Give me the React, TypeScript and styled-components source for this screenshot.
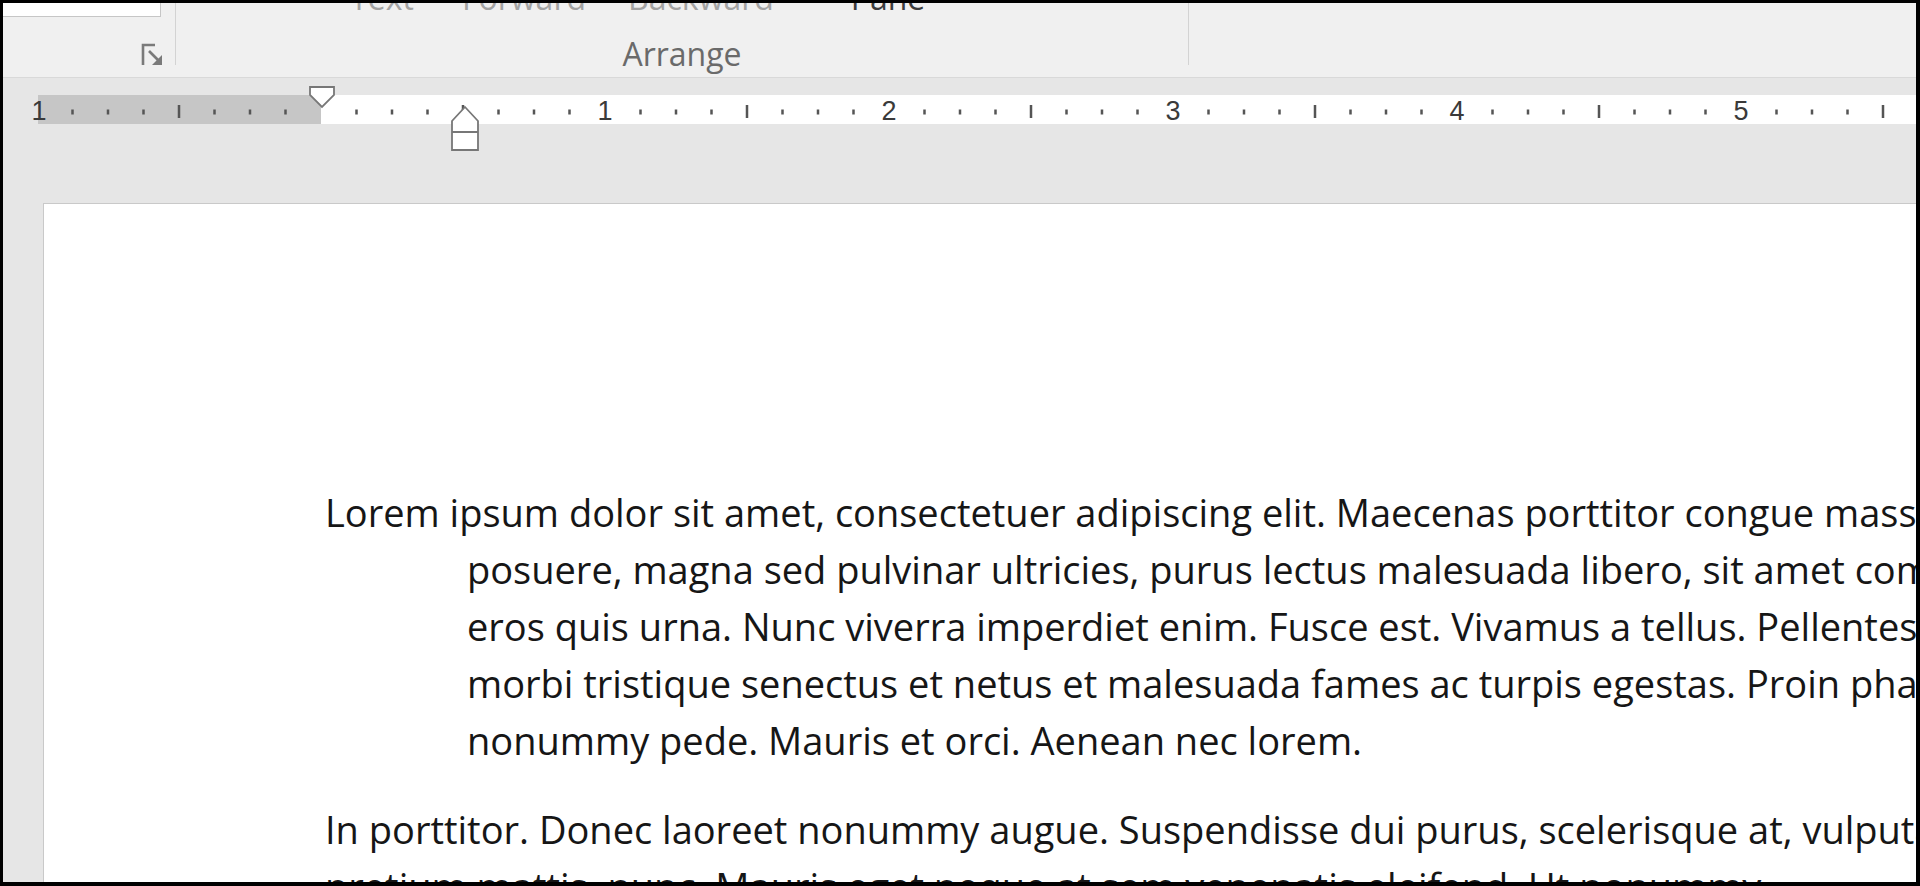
import styled, { createGlobalStyle } from 'styled-components';

const GlobalStyle = createGlobalStyle`
  html, body {
    margin: 0;
    padding: 0;
    background: #000;
  }
  body {
    font-family: "Open Sans", "Liberation Sans", sans-serif;
  }
`;

const Frame = styled.div`
  width: 1920px;
  height: 886px;
  box-sizing: border-box;
  border-style: solid;
  border-color: #000;
  border-width: 3px 4px 4px 3px;
  overflow: hidden;
  display: flex;
  flex-direction: column;
  background: #e6e6e6;
`;

const Ribbon = styled.div`
  flex: none;
  display: flex;
  height: 74px;
  background: #f0f0f0;
  border-bottom: 1px solid #d9d9d9;
`;

interface GroupProps {
  width?: number;
}

const Group = styled.div<GroupProps>`
  display: flex;
  flex-direction: column;
  justify-content: space-between;
  width: ${({ width }) => (width ? `${width}px` : 'auto')};
  flex: ${({ width }) => (width ? 'none' : '1')};
`;

const Separator = styled.div`
  flex: none;
  width: 1px;
  height: 62px;
  background: #d3d3d3;
`;

const InputBox = styled.div`
  width: 157px;
  height: 29px;
  margin-top: -17px;
  background: #fff;
  border: 1px solid #c6c6c6;
  border-left: none;
`;

const Launcher = styled.svg`
  align-self: flex-end;
  margin: 0 12px 11px 0;
  display: block;
`;

const ButtonRow = styled.div`
  display: flex;
  height: 40px;
  margin-top: -25px;
  padding-left: 154px;
`;

interface RibbonButtonProps {
  width: number;
  disabled?: boolean;
}

const RibbonButton = styled.div<RibbonButtonProps>`
  width: ${({ width }) => width}px;
  text-align: center;
  font-size: 32px;
  line-height: 40px;
  white-space: nowrap;
  color: ${({ disabled }) => (disabled ? '#a3a3a3' : '#3c3c3c')};
`;

const GroupLabel = styled.div`
  text-align: center;
  font-size: 32px;
  line-height: 40px;
  margin-bottom: 3px;
  color: #6a6a6a;
`;

const Workspace = styled.div`
  flex: 1;
  display: flex;
  flex-direction: column;
  min-height: 0;
`;

const RulerStrip = styled.svg`
  flex: none;
  display: block;
`;

const Page = styled.div`
  flex: 1;
  margin-left: 40px;
  padding: 280px 0 0 281px;
  background: #fff;
  border-top: 1px solid #c9c9c9;
  border-left: 1px solid #c9c9c9;
  font-family: "Open Sans", "Liberation Sans", sans-serif;
  font-size: 38px;
  line-height: 57px;
  color: #161616;
`;

const Paragraph = styled.div`
  margin: 0 0 32px;
`;

interface LineProps {
  hang?: boolean;
}

const Line = styled.div<LineProps>`
  white-space: nowrap;
  padding-left: ${({ hang }) => (hang ? 142 : 0)}px;
`;

const ZERO = 321;
const EIGHTH = 35.5;

function Ruler() {
  const marks = [];
  for (let k = -8; k <= 44; k++) {
    if (k === 0) continue;
    const x = ZERO + k * EIGHTH;
    if (k % 8 === 0) {
      marks.push(
        <text
          key={k}
          x={k < 0 ? x + 2 : x}
          y={120}
          textAnchor="middle"
          fontFamily='"Liberation Sans", Arial, sans-serif'
          fontSize={27}
          fill="#3a3a3a"
        >
          {Math.abs(k / 8)}
        </text>
      );
    } else if (k % 4 === 0) {
      marks.push(<rect key={k} x={x - 1.25} y={105} width={2.5} height={13} fill="#555" />);
    } else {
      marks.push(<rect key={k} x={x - 1.25} y={109.5} width={2.5} height={5} fill="#555" />);
    }
  }

  return (
    <RulerStrip width={1913} height={125} viewBox="3 78 1913 125">
      <rect x={38} y={95} width={283} height={29} fill="#c6c6c6" />
      <rect x={321} y={95} width={1600} height={29} fill="#fff" />
      {marks}
      <polygon
        points="310,87 334,87 334,95 322,107 310,95"
        fill="#fff"
        stroke="#777"
        strokeWidth={1.8}
      />
      <path
        d="M465 107 L478 121 V150 H452 V121 Z M452 132 H478"
        fill="#fff"
        stroke="#777"
        strokeWidth={1.8}
      />
    </RulerStrip>
  );
}

const App = () => {
  return (
    <>
      <GlobalStyle />
      <Frame>
        <Ribbon>
          <Group width={172}>
            <InputBox />
            <Launcher width={22} height={23} viewBox="0 0 22 23">
              <polyline points="14,2 2,2 2,22" fill="none" stroke="#7a7a7a" strokeWidth={2.6} />
              <line x1={8} y1={8} x2={17} y2={17} stroke="#7a7a7a" strokeWidth={2.6} />
              <polygon points="21,12 21,22 11,22" fill="#7a7a7a" />
            </Launcher>
          </Group>
          <Separator />
          <Group width={1012}>
            <ButtonRow>
              <RibbonButton width={104} disabled>Text</RibbonButton>
              <RibbonButton width={180} disabled>Forward</RibbonButton>
              <RibbonButton width={174} disabled>Backward</RibbonButton>
              <RibbonButton width={200}>Pane</RibbonButton>
            </ButtonRow>
            <GroupLabel>Arrange</GroupLabel>
          </Group>
          <Separator />
          <Group />
        </Ribbon>

        <Workspace>
          <Ruler />
          <Page>
            <Paragraph>
              <Line>Lorem ipsum dolor sit amet, consectetuer adipiscing elit. Maecenas porttitor congue massa. Fusce</Line>
              <Line hang>posuere, magna sed pulvinar ultricies, purus lectus malesuada libero, sit amet commodo magna</Line>
              <Line hang>eros quis urna. Nunc viverra imperdiet enim. Fusce est. Vivamus a tellus. Pellentesque habitant</Line>
              <Line hang>morbi tristique senectus et netus et malesuada fames ac turpis egestas. Proin pharetra</Line>
              <Line hang>nonummy pede. Mauris et orci. Aenean nec lorem.</Line>
            </Paragraph>
            <Paragraph>
              <Line>In porttitor. Donec laoreet nonummy augue. Suspendisse dui purus, scelerisque at, vulputate vitae,</Line>
              <Line>pretium mattis, nunc. Mauris eget neque at sem venenatis eleifend. Ut nonummy.</Line>
            </Paragraph>
          </Page>
        </Workspace>
      </Frame>
    </>
  );
};

export default App;
